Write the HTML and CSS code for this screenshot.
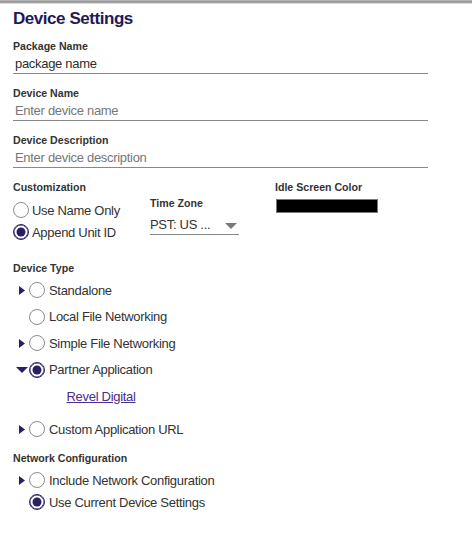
FILE: index.html
```html
<!DOCTYPE html>
<html>
<head>
<meta charset="utf-8">
<link rel="stylesheet" href="styles.css">
</head>
<body>
<div class="topbar"></div>
<main class="page">
  <h1 class="title">Device Settings</h1>

  <div class="field">
    <div class="label">Package Name</div>
    <div class="input">package name</div>
  </div>
  <div class="field">
    <div class="label">Device Name</div>
    <div class="input placeholder">Enter device name</div>
  </div>
  <div class="field">
    <div class="label">Device Description</div>
    <div class="input placeholder">Enter device description</div>
  </div>

  <div class="options">
    <div class="col col-custom">
      <div class="label">Customization</div>
      <div class="radio-list">
        <div class="rrow"><span class="radio"></span><span class="txt">Use Name Only</span></div>
        <div class="rrow"><span class="radio checked"></span><span class="txt">Append Unit ID</span></div>
      </div>
    </div>
    <div class="col col-tz">
      <div class="label">Time Zone</div>
      <div class="select">
        <span class="txt">PST: US ...</span>
        <svg class="caret" width="12" height="6" viewBox="0 0 12 6"><path d="M0 0 H12 L6 6 Z" fill="#7a7a7a"/></svg>
      </div>
    </div>
    <div class="col col-color">
      <div class="label">Idle Screen Color</div>
      <div class="swatch"></div>
    </div>
  </div>

  <div class="section section-type">
    <div class="label">Device Type</div>
    <div class="tree">
      <div class="trow"><span class="toggle"><svg width="6" height="9" viewBox="0 0 6 9"><path d="M0 0 L6 4.5 L0 9 Z" fill="#2a1f63"/></svg></span><span class="radio"></span><span class="txt">Standalone</span></div>
      <div class="trow"><span class="toggle"></span><span class="radio"></span><span class="txt">Local File Networking</span></div>
      <div class="trow"><span class="toggle"><svg width="6" height="9" viewBox="0 0 6 9"><path d="M0 0 L6 4.5 L0 9 Z" fill="#2a1f63"/></svg></span><span class="radio"></span><span class="txt">Simple File Networking</span></div>
      <div class="trow"><span class="toggle down"><svg width="12" height="6" viewBox="0 0 12 6"><path d="M0 0 H12 L6 6 Z" fill="#2a1f63"/></svg></span><span class="radio checked"></span><span class="txt">Partner Application</span></div>
      <div class="sub"><a class="link" href="#">Revel Digital</a></div>
      <div class="trow"><span class="toggle"><svg width="6" height="9" viewBox="0 0 6 9"><path d="M0 0 L6 4.5 L0 9 Z" fill="#2a1f63"/></svg></span><span class="radio"></span><span class="txt">Custom Application URL</span></div>
    </div>
  </div>

  <div class="section section-net">
    <div class="label">Network Configuration</div>
    <div class="tree net">
      <div class="trow"><span class="toggle"><svg width="6" height="9" viewBox="0 0 6 9"><path d="M0 0 L6 4.5 L0 9 Z" fill="#2a1f63"/></svg></span><span class="radio"></span><span class="txt">Include Network Configuration</span></div>
      <div class="trow"><span class="toggle"></span><span class="radio checked"></span><span class="txt">Use Current Device Settings</span></div>
    </div>
  </div>
</main>
</body>
</html>
```

FILE: styles.css
```css
* { box-sizing: border-box; }
html, body { margin: 0; padding: 0; background: #fff; }
body {
  font-family: "Liberation Sans", Arial, Helvetica, sans-serif;
  color: #333;
  width: 474px;
  height: 559px;
  overflow: hidden;
}
.topbar {
  width: 472px;
  height: 4px;
  background: linear-gradient(to bottom, #c4c4c4 0%, #8c8c8c 45%, #b8b8b8 75%, #f2f2f2 100%);
}
.page {
  padding: 4px 0 0 13px;
}
.title {
  margin: 0;
  font-size: 17px;
  line-height: 22px;
  font-weight: bold;
  letter-spacing: -0.45px;
  color: #221a57;
}
.label {
  font-size: 10.6px;
  line-height: 14px;
  font-weight: bold;
  color: #333;
}
.title + .field { margin-top: 9px; }
.field { width: 415px; margin-bottom: 12px; }
.input {
  padding: 2px 0 0 2px;
  font-size: 13px;
  line-height: 18px;
  letter-spacing: -0.3px;
  color: #2e2e2e;
  border-bottom: 1px solid #888;
}
.input.placeholder { color: #777; }
.txt {
  font-size: 13px;
  letter-spacing: -0.3px;
  color: #333;
  white-space: nowrap;
}
.options {
  display: grid;
  grid-template-columns: 137px 125px 120px;
}
.radio-list { margin-top: 5px; }
.rrow {
  display: flex;
  align-items: center;
  height: 22px;
}
.radio {
  width: 16px;
  height: 16px;
  flex: none;
  border-radius: 50%;
  border: 1px solid #8c8c8c;
  background: #fff;
  position: relative;
}
.rrow .radio { margin-right: 3px; }
.radio.checked { border: 1px solid #2a1f63; box-shadow: inset 0 0 0 0.5px #2a1f63; }
.radio.checked::after {
  content: "";
  position: absolute;
  left: 50%; top: 50%;
  width: 9px; height: 9px;
  transform: translate(-50%, -50%);
  border-radius: 50%;
  background: #2a1f63;
}
.col-tz { padding-top: 16px; }
.select {
  width: 89px;
  margin-top: 6px;
  height: 19px;
  line-height: 18px;
  display: flex;
  align-items: center;
  justify-content: space-between;
  border-bottom: 1px solid #888;
  padding-right: 2px;
}
.select .txt { line-height: 18px; }
.caret { display: block; margin-top: 1px; }
.swatch {
  margin-top: 5px;
  margin-left: 1px;
  width: 102px;
  height: 14px;
  background: #000;
  border: 1.5px solid #7a7a7a;
}
.section-type { margin-top: 18px; }
.tree { margin-top: 1.7px; }
.trow {
  display: flex;
  align-items: center;
  height: 26.65px;
}
.net { margin-top: 4px; }
.net .trow { height: 22px; }
.toggle {
  width: 16px;
  flex: none;
  display: flex;
  align-items: center;
  justify-content: center;
  padding-left: 2px;
}
.toggle.down { padding-left: 2px; }
.toggle svg { display: block; }
.trow .radio { margin-right: 4px; }
.sub {
  height: 26px;
  display: flex;
  align-items: center;
  padding-left: 53.5px;
  margin-bottom: 6.7px;
}
.link {
  font-size: 13px;
  letter-spacing: -0.3px;
  color: #4b2c92;
  text-decoration: underline;
}
.section-net { margin-top: 8.7px; }
```
